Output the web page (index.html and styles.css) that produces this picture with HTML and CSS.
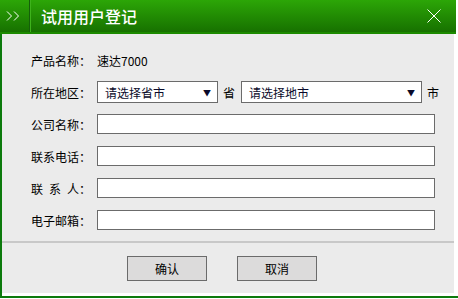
FILE: index.html
```html
<!DOCTYPE html>
<html lang="zh-CN">
<head>
  <meta charset="UTF-8">
  <title>试用用户登记</title>
  <link rel="stylesheet" href="styles.css">
</head>
<body>
  <div class="dialog">
    <div class="dialog-header">
      <div class="header-icon">
        <svg width="14" height="10" viewBox="0 0 14 10">
          <polyline points="1,0.5 5.5,5 1,9.5" fill="none" stroke="#fff" stroke-width="1"/>
          <polyline points="8,0.5 12.5,5 8,9.5" fill="none" stroke="#fff" stroke-width="1"/>
        </svg>
      </div>
      <h1>试用用户登记</h1>
      <button class="close-btn" title="关闭">
        <svg width="14" height="14" viewBox="0 0 14 14">
          <line x1="0.5" y1="0.5" x2="13.5" y2="13.5" stroke="#fff" stroke-width="1"/>
          <line x1="13.5" y1="0.5" x2="0.5" y2="13.5" stroke="#fff" stroke-width="1"/>
        </svg>
      </button>
    </div>

    <div class="dialog-body">
      <div class="form">
        <div class="form-row">
          <label>产品名称：</label>
          <span class="value">速达7000</span>
        </div>
        <div class="form-row">
          <label>所在地区：</label>
          <div class="select select-province">
            <span>请选择省市</span><i>▼</i>
          </div>
          <span class="unit">省</span>
          <div class="select select-city">
            <span>请选择地市</span><i>▼</i>
          </div>
          <span class="unit">市</span>
        </div>
        <div class="form-row">
          <label>公司名称：</label>
          <input type="text">
        </div>
        <div class="form-row">
          <label>联系电话：</label>
          <input type="text">
        </div>
        <div class="form-row">
          <label>联&ensp;系&ensp;人：</label>
          <input type="text">
        </div>
        <div class="form-row">
          <label>电子邮箱：</label>
          <input type="text">
        </div>
      </div>

      <div class="dialog-footer">
        <button class="btn">确认</button>
        <button class="btn">取消</button>
      </div>
    </div>
  </div>
</body>
</html>
```

FILE: styles.css
```css
* {
  margin: 0;
  padding: 0;
  box-sizing: border-box;
}
body {
  background: #fff;
  font-family: "Noto Sans CJK SC", "Liberation Sans", sans-serif;
  font-size: 12px;
  color: #000;
}
.dialog {
  width: 458px;
  border-left: 2px solid #0c7a0c;
  border-bottom: 2px solid #0c7a0c;
  background: #fff;
  padding-bottom: 3px;
}
.dialog-header {
  margin-left: -2px;
  width: 456px;
  height: 34px;
  display: flex;
  align-items: center;
  background: linear-gradient(#2ca607, #177100);
  border-bottom: 2px solid #1c8a00;
}
.header-icon {
  width: 31px;
  height: 32px;
  display: flex;
  align-items: center;
  justify-content: center;
  padding-right: 4px;
  border-right: 1px solid #3eb21c;
  box-shadow: inset -1px 0 0 #155f0a;
}
.dialog-header h1 {
  flex: 1;
  margin-left: 10px;
  font-size: 16px;
  font-weight: 500;
  color: #fff;
  line-height: 32px;
}
.close-btn {
  width: 14px;
  height: 14px;
  margin-right: 15px;
  margin-top: -1px;
  background: none;
  border: none;
  display: flex;
}
.dialog-body {
  width: 452px;
  background: #ebebeb;
}
.form {
  padding: 10px 0 0 29px;
}
.form-row {
  height: 32px;
  display: flex;
  align-items: center;
}
.form-row label {
  width: 66px;
  white-space: nowrap;
}
.form-row input {
  width: 338px;
  height: 20px;
  border: 1px solid #6b6b6b;
  background: #fff;
  outline: none;
}
.select {
  position: relative;
  height: 22px;
  border: 1px solid #6b6b6b;
  background: #fff;
  display: flex;
  align-items: center;
  padding-left: 7px;
  color: #0a0a2a;
}
.select i {
  position: absolute;
  right: 6px;
  top: 5px;
  font-style: normal;
  font-size: 8px;
}
.select-province {
  width: 121px;
}
.select-city {
  width: 181px;
}
.unit {
  margin: 0 6px 0 5px;
}
.dialog-footer {
  margin-top: 5px;
  border-top: 2px solid #c8c8c8;
  padding: 13px 12px 12px 0;
  display: flex;
  justify-content: center;
  gap: 30px;
}
.btn {
  width: 80px;
  height: 25px;
  background: #dcdbdb;
  border: 1px solid #6b6b6b;
  font-family: inherit;
  font-size: 12px;
  color: #000;
}
```
